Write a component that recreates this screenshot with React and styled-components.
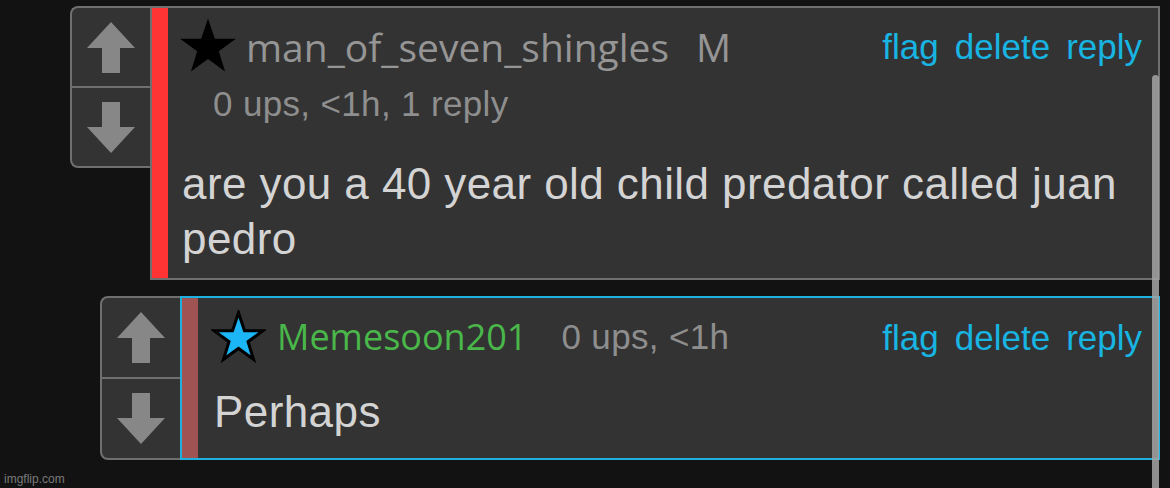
import React from 'react'
import styled, { createGlobalStyle } from 'styled-components'

const GlobalStyle = createGlobalStyle`
    html, body {
        margin: 0;
        padding: 0;
        background: #121212;
    }
    body {
        font-family: "Liberation Sans", Arial, sans-serif;
    }
`

const Page = styled.div`
    position: relative;
    width: 1170px;
    height: 488px;
    padding: 6px 10px 0 0;
    box-sizing: border-box;
    overflow: hidden;
`

const Row = styled.div`
    display: flex;
    align-items: flex-start;
    margin-left: ${p => p.indent}px;
    margin-top: ${p => p.gap || 0}px;
`

const VoteBox = styled.div`
    display: flex;
    flex-direction: column;
    flex: 0 0 80px;
    height: ${p => p.height}px;
    box-sizing: border-box;
    border: 2px solid #6f6f6f;
    border-right: none;
    border-radius: 8px 0 0 8px;
    background: #333;
`

const VoteButton = styled.div`
    flex: 1;
    display: flex;
    align-items: center;
    justify-content: center;
    & + & {
        border-top: 2px solid #6f6f6f;
    }
`

const CommentBox = styled.div`
    flex: 1;
    display: flex;
    border: 2px solid ${p => p.border};
    background: #333;
    min-height: ${p => p.minHeight}px;
`

const Bar = styled.div`
    flex: 0 0 16px;
    background: ${p => p.color};
`

const Content = styled.div`
    flex: 1;
    display: flex;
    flex-direction: column;
    padding: ${p => p.pad};
`

const Header = styled.div`
    display: flex;
    align-items: center;
    height: ${p => p.height}px;
`

const UserName = styled.span`
    font-family: "Open Sans", sans-serif;
    font-size: ${p => p.size}px;
    color: ${p => p.color};
    margin-left: ${p => p.offset}px;
    line-height: 1;
`

const Badge = styled.span`
    font-family: "Open Sans", sans-serif;
    font-size: 39px;
    color: #959595;
    margin-left: 27px;
    line-height: 1;
`

const Meta = styled.div`
    font-size: 35px;
    letter-spacing: 0.35px;
    color: #8e8e8e;
    line-height: 40px;
    margin-left: ${p => p.offset || 0}px;
    margin-top: ${p => p.top || 0}px;
`

const Actions = styled.div`
    display: flex;
    gap: 16px;
    margin-left: auto;
    margin-right: 2px;
`

const ActionLink = styled.a`
    font-size: 35px;
    color: #18b4e2;
    text-decoration: none;
    line-height: 1;
    cursor: pointer;
`

const Body = styled.div`
    font-size: 44px;
    letter-spacing: 0.42px;
    color: #d4d4d4;
    line-height: ${p => p.lineHeight}px;
    margin-top: ${p => p.top}px;
    margin-left: 3px;
`

const Scroll = styled.div`
    position: absolute;
    left: 1152px;
    top: 75px;
    width: 7px;
    bottom: 0;
    border-radius: 4px 4px 0 0;
    background: rgba(165, 165, 165, 0.85);
`

const Watermark = styled.div`
    position: absolute;
    left: 4px;
    bottom: 2px;
    font-size: 12px;
    color: #7a7a7a;
`

const Arrow = ({ down }) => (
    <svg width="48" height="51" viewBox="0 0 48 51" style={{ transform: down ? 'rotate(180deg)' : 'none' }}>
        <polygon points="24,0 48,26 33,26 33,51 15,51 15,26 0,26" fill="#878787" />
    </svg>
)

const Star = ({ width, height, fill, stroke }) => (
    <svg width={width} height={height} viewBox={stroke ? '-4 -4 108 103' : '0 0 100 95'}>
        <polygon
            points="50,0 61.8,35.1 98.1,35.1 68.7,56.7 79.4,91.3 50,70 20.6,91.3 31.3,56.7 1.9,35.1 38.2,35.1"
            fill={fill}
            stroke={stroke || 'none'}
            strokeWidth={stroke ? 6 : 0}
        />
    </svg>
)

const Votes = ({ height }) => (
    <VoteBox height={height}>
        <VoteButton><Arrow /></VoteButton>
        <VoteButton><Arrow down /></VoteButton>
    </VoteBox>
)

const CommentActions = () => (
    <Actions>
        <ActionLink>flag</ActionLink>
        <ActionLink>delete</ActionLink>
        <ActionLink>reply</ActionLink>
    </Actions>
)

const App = () => {
    return (
        <Page>
            <GlobalStyle />
            <Row indent={70}>
                <Votes height={162} />
                <CommentBox border="#6f6f6f" minHeight={270}>
                    <Bar color="#fe3434" />
                    <Content pad="10px 14px 12px 11px">
                        <Header height={56}>
                            <Star width={58} height={56} fill="#000" />
                            <UserName size={39} color="#959595" offset={9}>man_of_seven_shingles</UserName>
                            <Badge>M</Badge>
                            <CommentActions />
                        </Header>
                        <Meta offset={34} top={10}>0 ups, &lt;1h, 1 reply</Meta>
                        <Body lineHeight={55} top={32}>
                            are you a 40 year old child predator called juan pedro
                        </Body>
                    </Content>
                </CommentBox>
            </Row>
            <Row indent={100} gap={16}>
                <Votes height={164} />
                <CommentBox border="#1cb1de" minHeight={160}>
                    <Bar color="#a05353" />
                    <Content pad="12px 14px 0 13px">
                        <Header height={54}>
                            <Star width={55} height={54} fill="#1cb6f6" stroke="#000" />
                            <UserName size={36} color="#4ab74a" offset={11}>Memesoon201</UserName>
                            <Meta offset={34}>0 ups, &lt;1h</Meta>
                            <CommentActions />
                        </Header>
                        <Body lineHeight={50} top={23}>Perhaps</Body>
                    </Content>
                </CommentBox>
            </Row>
            <Scroll />
            <Watermark>imgflip.com</Watermark>
        </Page>
    )
}

export default App
